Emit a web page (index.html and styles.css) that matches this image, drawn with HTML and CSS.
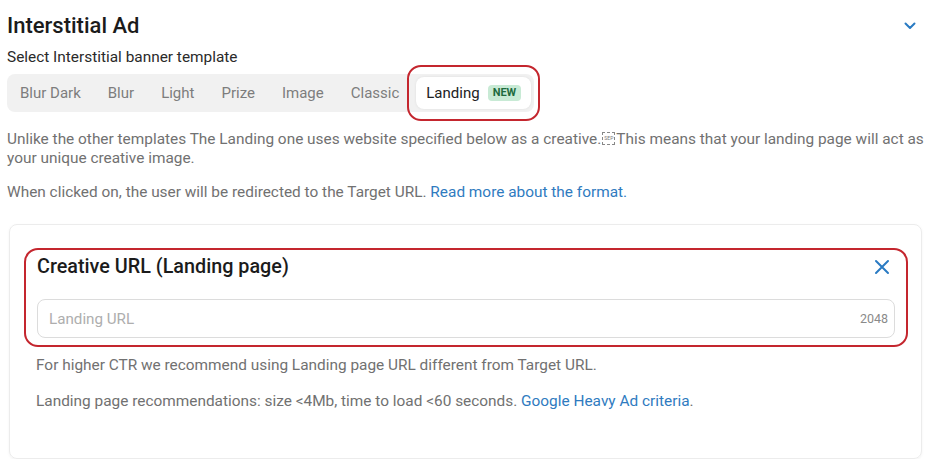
FILE: index.html
```html
<!DOCTYPE html>
<html>
<head>
  <title>Interstitial Ad</title>
  <link rel="stylesheet" href="styles.css">
</head>
<body>
  <div id="section">
    <div class="section-head">
      <h1>Interstitial Ad</h1>
      <svg class="chevron" width="12" height="8" viewBox="0 0 12 8"><path d="M1.5 1.5 L6 6 L10.5 1.5" fill="none" stroke="#2a7bc3" stroke-width="2" stroke-linecap="round" stroke-linejoin="round"/></svg>
    </div>

    <div class="label">Select Interstitial banner template</div>

    <div class="tabs">
      <span class="tab">Blur Dark</span>
      <span class="tab">Blur</span>
      <span class="tab">Light</span>
      <span class="tab">Prize</span>
      <span class="tab">Image</span>
      <span class="tab">Classic</span>
      <span class="tab active">Landing <span class="badge">NEW</span></span>
    </div>

    <p class="note">Unlike the other templates The Landing one uses website specified below as a creative.<span class="lsep">SEP</span>This means that your landing page will act as your unique creative image.</p>
    <p class="note">When clicked on, the user will be redirected to the Target URL. <a href="#">Read more about the format.</a></p>

    <div class="card">
      <div class="marked">
        <div class="card-head">
          <h2>Creative URL (Landing page)</h2>
          <svg class="close" width="16" height="16" viewBox="0 0 16 16"><path d="M2 2 L14 14 M14 2 L2 14" stroke="#2a7bc3" stroke-width="2" stroke-linecap="round"/></svg>
        </div>
        <div class="field">
          <input type="text" placeholder="Landing URL">
          <span class="counter">2048</span>
        </div>
      </div>
      <p class="hint">For higher CTR we recommend using Landing page URL different from Target URL.</p>
      <p class="hint">Landing page recommendations: size &lt;4Mb, time to load &lt;60 seconds. <a href="#">Google Heavy Ad criteria</a>.</p>
    </div>
  </div>
</body>
</html>
```

FILE: styles.css
```css
body {
  font-family: Roboto, "Liberation Sans", sans-serif;
  margin: 0;
  padding: 0;
  background-color: #fff;
  color: #1b1b1b;
}

#section {
  padding: 13px 7px 0 7px;
}

.section-head {
  display: flex;
  align-items: center;
  justify-content: space-between;
}

.section-head h1 {
  font-size: 22px;
  font-weight: 500;
  margin: 0;
  line-height: 26px;
}

.chevron {
  margin-right: 9px;
}

.label {
  font-size: 15.4px;
  color: #2a2a2a;
  margin-top: 9px;
  line-height: 19px;
}

.tabs {
  display: inline-flex;
  align-items: center;
  gap: 7px;
  margin-top: 7px;
  padding: 3px;
  background-color: #f1f1f1;
  border-radius: 8px;
}

.tab {
  display: inline-flex;
  align-items: center;
  height: 32px;
  padding: 0 10px;
  font-size: 15px;
  color: #7d7d7d;
}

.tab.active {
  position: relative;
  background-color: #fff;
  color: #222;
  border-radius: 8px;
  box-shadow: 0 0 3px rgba(0, 0, 0, 0.08);
}

/* red annotation ring */
.tab.active::after {
  content: "";
  position: absolute;
  left: -9px;
  right: -9px;
  top: -12px;
  bottom: -12px;
  border: 2px solid #c4262e;
  border-radius: 14px;
}

.badge {
  margin-left: 8px;
  padding: 2px 5px;
  font-size: 11px;
  font-weight: 700;
  color: #1e6a3f;
  background-color: #c8ead5;
  border-radius: 4px;
  line-height: 12px;
}

.note {
  font-size: 15.4px;
  line-height: 19px;
  color: #717171;
  margin: 18px 0 0 0;
}

.note + .note {
  margin-top: 15px;
}

a {
  color: #2f7bbf;
  text-decoration: none;
}

.lsep {
  display: inline-block;
  overflow: hidden;
  font-size: 5px;
  line-height: 11px;
  text-align: center;
  border: 1px dashed #888;
  width: 13px;
  height: 13px;
  box-sizing: border-box;
  vertical-align: -1px;
  color: #777;
  margin: 0 1px;
}

.card {
  margin: 22px 3px 0 2px;
  padding: 23px 13px 47px 14px;
  border: 1px solid #ececec;
  border-radius: 8px;
  box-shadow: 0 1px 3px rgba(0, 0, 0, 0.05);
}

.marked {
  border: 2px solid #c4262e;
  border-radius: 14px;
  padding: 6px 11px 7px 11px;
}

.card-head {
  display: flex;
  align-items: center;
  justify-content: space-between;
}

.card-head h2 {
  font-size: 19.8px;
  font-weight: 500;
  margin: 0;
  line-height: 22px;
}

.close {
  margin-right: 5px;
}

.field {
  position: relative;
  margin-top: 21px;
}

.field input {
  box-sizing: border-box;
  width: 100%;
  height: 39px;
  padding: 0 11px;
  border: 1px solid #dcdcdc;
  border-radius: 8px;
  font-family: Roboto, "Liberation Sans", sans-serif;
  font-size: 15.2px;
}

.field input::placeholder {
  color: #aeaeae;
}

.counter {
  position: absolute;
  right: 7px;
  top: 12px;
  font-size: 12.5px;
  color: #8a8a8a;
}

.hint {
  font-size: 15.4px;
  line-height: 19px;
  color: #717171;
  margin: 9px 0 0 12px;
}

.hint + .hint {
  margin-top: 17px;
}
```
